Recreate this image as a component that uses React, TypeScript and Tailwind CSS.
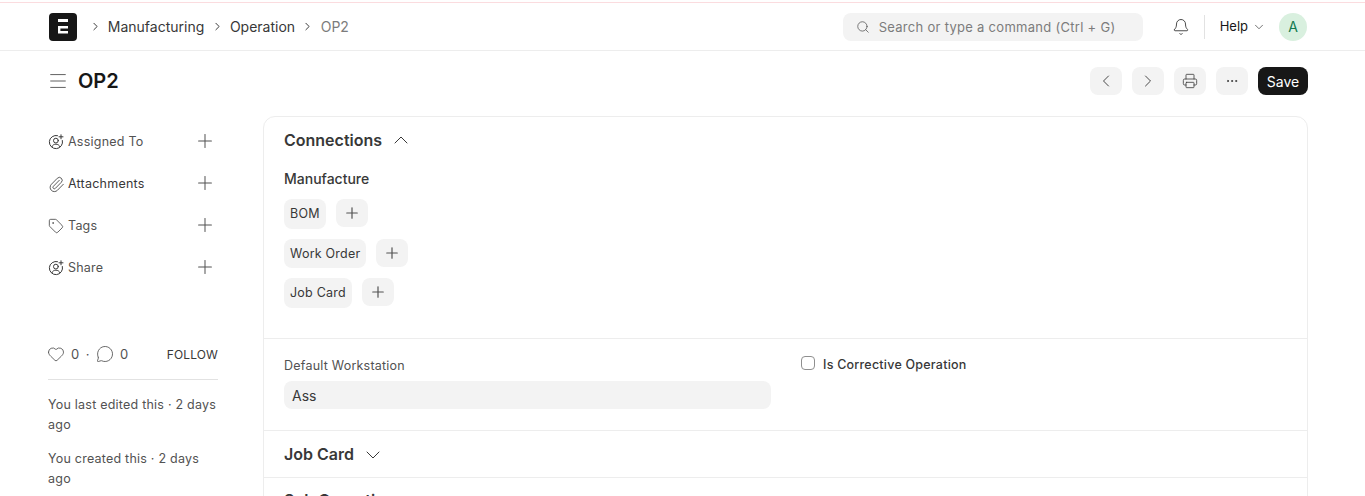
import React from 'react';
import { Bell, ChevronDown, ChevronLeft, ChevronRight, ChevronUp, Ellipsis, Heart, MessageCircle, Menu, Paperclip, Plus, Printer, Search, Tag } from 'lucide-react';

const UserPlus = () => (
    <svg width="16" height="16" viewBox="0 0 16 16" fill="none" stroke="#383838" strokeWidth="1" strokeLinecap="round" className="shrink-0">
        <path d="M9.5 1.6A6.6 6.6 0 1 0 14.4 6.5" />
        <circle cx="7.9" cy="6.6" r="2.4" />
        <path d="M3.9 12.7C4.6 11 6 10.2 7.9 10.2s3.3.8 4 2.5" />
        <path d="M13 .8v4M11 2.8h4" />
    </svg>
);

const sideItems = [
    { label: 'Assigned To', icon: <UserPlus /> },
    { label: 'Attachments', icon: <Paperclip size={17} strokeWidth={1.15} color="#383838" className="shrink-0 -mx-[0.5px]" /> },
    { label: 'Tags', icon: <Tag size={16} strokeWidth={1.15} color="#383838" className="shrink-0" /> },
    { label: 'Share', icon: <UserPlus /> },
];

const Crumb = ({ label, muted }: { label: string; muted?: boolean }) => (
    <>
        <ChevronRight size={13} strokeWidth={1.8} color="#383838" />
        <span className={muted ? 'text-[#7c7c7c]' : 'text-[#383838]'}>{label}</span>
    </>
);

const IconBtn = ({ children }: { children: React.ReactNode }) => (
    <button className="w-8 h-7 rounded-lg bg-[#f3f3f3] flex items-center justify-center text-[#383838]">{children}</button>
);

const LinkRow = ({ label, tall }: { label: string; tall?: boolean }) => (
    <div className="flex items-start gap-2.5">
        <span className={`${tall ? 'h-[30px]' : 'h-[29px] pt-px'} px-1.5 rounded-lg bg-[#f3f3f3] text-[12.5px] tracking-[0.018em] text-[#383838] flex items-center`}>{label}</span>
        <button className="w-8 h-7 rounded-lg bg-[#f3f3f3] flex items-center justify-center">
            <Plus size={18} strokeWidth={1.6} color="#525252" />
        </button>
    </div>
);

export default function App() {
    return (
        <div className="h-[496px] overflow-hidden bg-white font-['Inter',sans-serif] text-[#171717]">
            <div className="h-[3px] pt-[2px]">
                <div className="h-px bg-[#fbdcdf]" />
            </div>
            <header className="h-[48px] border-b border-[#ededed] pl-[49px] pr-[58px] flex items-center">
                <div className="w-7 h-7 rounded bg-[#171717] flex items-center justify-center">
                    <svg width="10" height="15" viewBox="0 0 10 15" fill="white">
                        <path d="M0 0h10v3H0zM0 7h10v2.4H2.4v2.6H10v2.6H0z" />
                    </svg>
                </div>
                <nav className="ml-[11.5px] flex items-center gap-[6.3px] text-[14px]">
                    <Crumb label="Manufacturing" />
                    <Crumb label="Operation" />
                    <Crumb label="OP2" muted />
                </nav>
                <div className="ml-auto w-[300px] h-7 rounded-lg bg-[#f3f3f3] flex items-center pl-[13px] gap-[9px] text-[13px] tracking-[0.022em] text-[#7c7c7c]">
                    <Search size={14} strokeWidth={1.3} color="#525252" />
                    <span className="pt-[2px]">Search or type a command (Ctrl + G)</span>
                </div>
                <Bell size={18} strokeWidth={1.2} color="#383838" className="ml-[29px]" />
                <div className="ml-[14px] w-px h-6 bg-[#e2e2e2]" />
                <span className="ml-[15px] text-[13px] text-[#171717]">Help</span>
                <ChevronDown size={14} strokeWidth={1.2} color="#383838" className="ml-1" />
                <div className="ml-[13px] w-7 h-7 rounded-full bg-[#d9f0df] flex items-center justify-center text-[14px] text-[#137a50]">A</div>
            </header>

            <div className="h-[65px] pl-[47px] pr-[57px] pt-4 flex items-start">
                <Menu size={22} strokeWidth={1} color="#525252" className="mt-[3px]" />
                <h1 className="ml-[9px] h-7 leading-7 text-[20px] font-semibold text-[#171717]">OP2</h1>
                <div className="ml-auto flex items-center gap-2.5">
                    <IconBtn><ChevronLeft size={20} strokeWidth={1.1} /></IconBtn>
                    <IconBtn><ChevronRight size={20} strokeWidth={1.1} /></IconBtn>
                    <IconBtn><Printer size={16} strokeWidth={1.2} /></IconBtn>
                    <IconBtn><Ellipsis size={14} strokeWidth={1.6} /></IconBtn>
                    <button className="h-7 w-[50px] rounded-lg bg-[#171717] text-white text-[14px]">Save</button>
                </div>
            </div>

            <div className="pl-[48px] pr-[57px] flex items-start">
                <aside className="w-[170px] shrink-0 pt-[18px]">
                    <div className="flex flex-col gap-[26px]">
                        {sideItems.map((item) => (
                            <div key={item.label} className="h-4 flex items-center gap-[4px] text-[12.5px] tracking-[0.018em] text-[#525252]">
                                {item.icon}
                                <span className={item.label === 'Attachments' ? 'text-[#383838]' : ''}>{item.label}</span>
                                <Plus size={22} strokeWidth={1.1} color="#525252" className="ml-auto mr-[2px] mb-[2px]" />
                            </div>
                        ))}
                    </div>
                    <div className="mt-[71px] flex items-center text-[13px] text-[#525252] h-4">
                        <Heart size={18} strokeWidth={1} color="#383838" className="-ml-px mb-[2px]" />
                        <span className="ml-[6px]">0</span>
                        <span className="mx-[6.5px]">·</span>
                        <MessageCircle size={18} strokeWidth={1} color="#383838" className="mb-[2px]" />
                        <span className="ml-[6px]">0</span>
                        <span className="ml-auto text-[12px] tracking-[0.01em] text-[#383838]">FOLLOW</span>
                    </div>
                    <div className="mt-[16px] h-px bg-[#e2e2e2]" />
                    <p className="mt-[15px] text-[12.5px] leading-[20px] tracking-[0.018em] text-[#525252]">You last edited this · 2 days ago</p>
                    <p className="mt-[14px] text-[12.5px] leading-[20px] tracking-[0.018em] text-[#525252]">You created this · 2 days ago</p>
                </aside>

                <main className="ml-[45px] flex-1 border border-[#ededed] rounded-t-xl">
                    <section className="h-[222px] border-b border-[#ededed] px-5 pt-[13px]">
                        <div className="flex items-center h-5 text-[16px] font-semibold text-[#383838]">
                            Connections
                            <ChevronUp size={24} strokeWidth={1} color="#383838" className="ml-[7px]" />
                        </div>
                        <div className="mt-[18px] text-[14px] font-medium text-[#383838]">Manufacture</div>
                        <div className="mt-[10px] flex flex-col gap-[10px]">
                            <LinkRow label="BOM" tall />
                            <LinkRow label="Work Order" />
                            <LinkRow label="Job Card" tall />
                        </div>
                    </section>
                    <section className="h-[92px] border-b border-[#ededed] px-5 pt-[19px] flex gap-[30px]">
                        <div className="w-[487px]">
                            <div className="text-[12.5px] leading-4 tracking-[0.018em] text-[#525252]">Default Workstation</div>
                            <div className="mt-[7px] h-7 rounded-lg bg-[#f3f3f3] px-2 flex items-center text-[14px] text-[#383838]">Ass</div>
                        </div>
                        <label className="-mt-[2px] h-4 flex items-center gap-2 text-[12.5px] tracking-[0.018em] font-medium text-[#383838]">
                            <span className="w-3.5 h-3.5 rounded-[4px] border border-[#8f8f8f] bg-white mb-[2px]" />
                            <span className="pt-[2px]">Is Corrective Operation</span>
                        </label>
                    </section>
                    <section className="h-[47px] border-b border-[#ededed] px-5 flex items-center text-[16px] font-semibold text-[#383838]">
                        Job Card
                        <ChevronDown size={24} strokeWidth={1} color="#383838" className="mt-[2px] ml-[7px]" />
                    </section>
                    <section className="px-5 pt-[10px] text-[16px] font-semibold text-[#383838]">Sub Operations</section>
                </main>
            </div>
        </div>
    );
}
